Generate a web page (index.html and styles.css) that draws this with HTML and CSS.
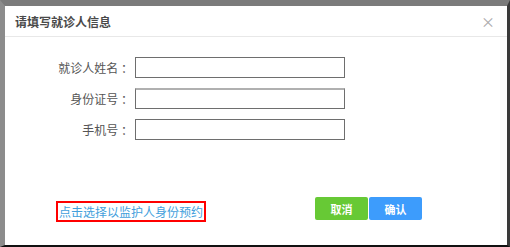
FILE: index.html
```html
<!DOCTYPE html>
<html lang="zh-CN">
<head>
    <meta charset="UTF-8">
    <title>请填写就诊人信息</title>
    <link rel="stylesheet" href="styles.css">
</head>
<body>

<div class="frame">
    <div class="modal">
        <div class="modal-header">
            <span class="modal-title">请填写就诊人信息</span>
            <span class="close">&times;</span>
        </div>

        <div class="modal-body">
            <div class="form-row">
                <label for="name">就诊人姓名 ：</label>
                <input type="text" id="name" class="form-field">
            </div>
            <div class="form-row">
                <label for="idcard">身份证号 ：</label>
                <input type="text" id="idcard" class="form-field field-shadow">
            </div>
            <div class="form-row">
                <label for="phone">手机号 ：</label>
                <input type="text" id="phone" class="form-field">
            </div>
        </div>

        <div class="modal-footer">
            <a class="guardian-link" href="#">点击选择以监护人身份预约</a>
            <div class="buttons">
                <button class="cancel-button">取消</button>
                <button class="confirm-button">确认</button>
            </div>
        </div>
    </div>
</div>

</body>
</html>
```

FILE: styles.css
```css
body {
    margin: 0;
    padding: 0;
    font-family: "Noto Sans CJK SC", "Liberation Sans", sans-serif;
    background-color: #7d7d7d;
}
.frame {
    width: 510px;
    height: 247px;
    box-sizing: border-box;
    border-top: 6px solid #7b7b7b;
    border-left: 5px solid #8c8c8c;
    border-right: 3px solid #3a3a3a;
    border-bottom: 2px solid #111;
}
.modal {
    background-color: #fff;
    height: 100%;
}
.modal-header {
    height: 30px;
    border-bottom: 1px solid #e8e8e8;
    display: flex;
    align-items: center;
    justify-content: space-between;
    padding: 0 12px 0 10px;
}
.modal-title {
    font-size: 12px;
    font-weight: bold;
    color: #4a4a4a;
}
.close {
    font-size: 14px;
    color: #aaa;
    line-height: 1;
}
.modal-body {
    padding-top: 20px;
    display: flex;
    flex-direction: column;
    gap: 10px;
}
.form-row {
    display: flex;
    align-items: center;
    height: 21px;
}
.form-row label {
    width: 130px;
    text-align: right;
    font-size: 12px;
    color: #555;
    padding-right: 2px;
    box-sizing: border-box;
}
.form-field {
    width: 210px;
    height: 21px;
    box-sizing: border-box;
    border: 1px solid #6e6e6e;
    padding: 0 4px;
    margin: 0;
    font-size: 12px;
}
.field-shadow {
    border-top: 2px solid #b0b0b0;
}
.modal-footer {
    display: flex;
    align-items: flex-start;
    padding-left: 51px;
    margin-top: 57px;
}
.guardian-link {
    margin-top: 4px;
    height: 21px;
    box-sizing: border-box;
    border: 2px solid #f00;
    padding: 0 1px;
    font-size: 12px;
    line-height: 17px;
    color: #42a0dc;
    text-decoration: none;
}
.buttons {
    display: flex;
    margin-left: 109px;
    gap: 1px;
}
.buttons button {
    width: 53px;
    height: 23px;
    border: none;
    border-radius: 2px;
    color: #fff;
    font-size: 11px;
    font-weight: bold;
    font-family: "Noto Sans CJK SC", sans-serif;
    padding: 0;
}
.cancel-button {
    background-color: #67c935;
}
.confirm-button {
    background-color: #3d9cfc;
}
```
